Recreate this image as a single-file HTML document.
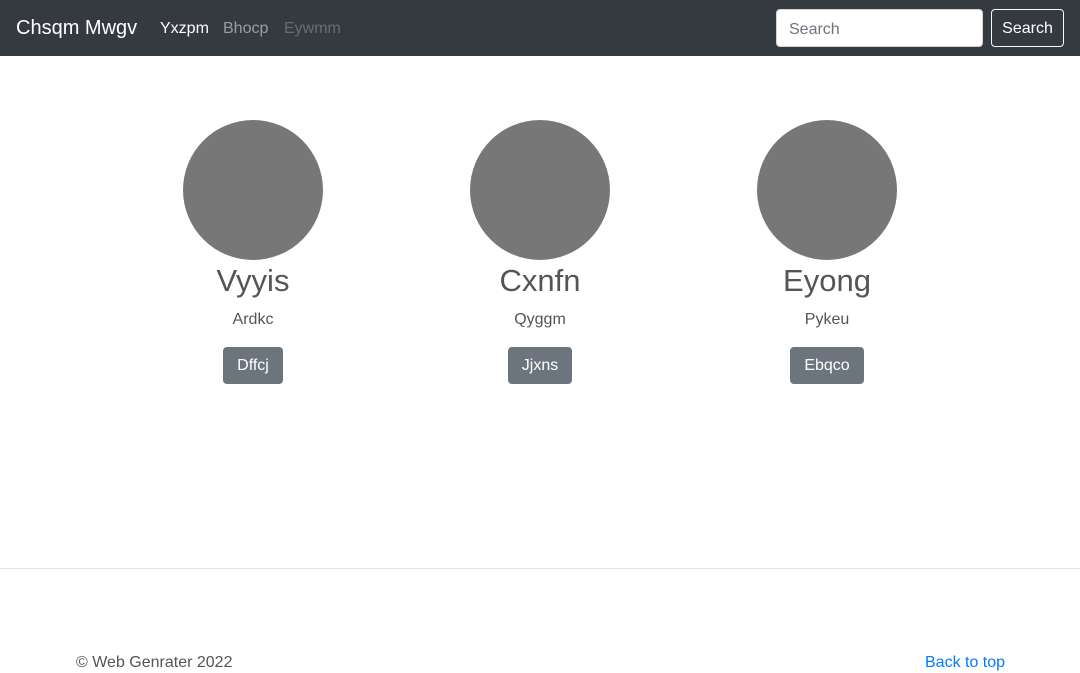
<!DOCTYPE html>
<html><head><meta charset="utf-8"><style>
*{box-sizing:border-box;margin:0;padding:0}
body{width:1080px;height:673px;overflow:hidden;font-family:"Liberation Sans",sans-serif;background:#fff;color:#212529;position:relative;font-size:16px}
.nav{position:absolute;left:0;top:0;width:1080px;height:56px;background:#343a40}
.brand{position:absolute;left:16px;top:17px;font-size:20px;color:#fff}
.l{position:absolute;top:20px;font-size:16px}
.inp{position:absolute;left:776px;top:9px;width:207px;height:38px;background:#fff;border:1px solid #ced4da;border-radius:4px;color:#6c757d;padding:10px 12px;font-size:16px;line-height:20px}
.sb{position:absolute;left:991px;top:9px;width:73px;height:38px;border:1px solid #f8f9fa;border-radius:4px;color:#fff;text-align:center;line-height:38px}
.card{position:absolute;top:120px;width:240px;text-align:center}
.c{width:140px;height:140px;border-radius:50%;background:#777;margin:0 auto}
.n{font-size:31px;color:#555;margin-top:2px;line-height:38px}
.s{font-size:16px;color:#555;margin-top:10px;line-height:20px}
.b{display:inline-block;margin-top:17px;background:#6c757d;color:#fff;border-radius:4px;padding:0 14px;height:37px;line-height:37px}
hr{position:absolute;left:0;top:568px;width:1080px;border:0;border-top:1px solid #e5e5e5}
.f{position:absolute;top:654px;font-size:16px;color:#555}
</style></head><body>
<div class="nav">
<div class="brand">Chsqm Mwgv</div>
<div class="l" style="left:160px;color:#fff">Yxzpm</div>
<div class="l" style="left:223px;color:rgba(255,255,255,.5)">Bhocp</div>
<div class="l" style="left:284px;color:rgba(255,255,255,.25)">Eywmm</div>
<div class="inp">Search</div>
<div class="sb">Search</div>
</div>
<div class="card" style="left:133px"><div class="c"></div><div class="n">Vyyis</div><div class="s">Ardkc</div><div class="b">Dffcj</div></div>
<div class="card" style="left:420px"><div class="c"></div><div class="n">Cxnfn</div><div class="s">Qyggm</div><div class="b">Jjxns</div></div>
<div class="card" style="left:707px"><div class="c"></div><div class="n">Eyong</div><div class="s">Pykeu</div><div class="b">Ebqco</div></div>
<hr>
<div class="f" style="left:76px">© Web Genrater 2022</div>
<div class="f" style="left:925px;color:#007bff">Back to top</div>
</body></html>
